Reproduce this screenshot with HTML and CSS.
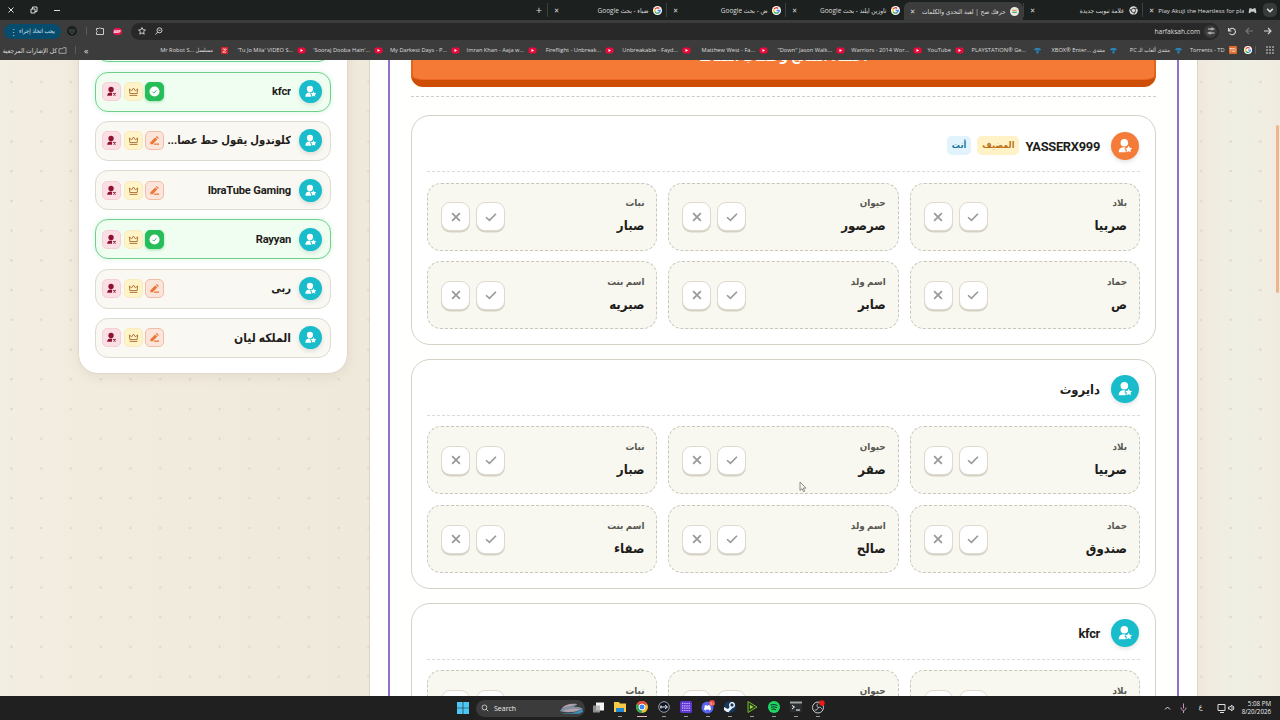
FILE: index.html
```html
<!DOCTYPE html>
<html lang="ar" dir="rtl">
<head>
    <meta charset="UTF-8">
    <meta name="viewport" content="width=device-width, initial-scale=1.0">
    <title>حرفك صح | لعبة التحدي والكلمات</title>
    <link rel="stylesheet" href="styles.css">
</head>
<body>
    <svg class="sprite" width="0" height="0">
        <symbol id="i-user" viewBox="0 0 24 24"><circle cx="11" cy="7.200" r="5.700"/><path d="M2.500 21.500c0-5 3-7.500 7.500-7.500 1.500 0 2 .2 2.500.5L11 16.500l2 2v3z"/><path d="M17.500 11.500l1.700 3.300 3.600.5-2.600 2.500.6 3.700-3.300-1.800-3.300 1.800.6-3.700-2.600-2.500 3.600-.5z"/></symbol>
        <symbol id="i-kick" viewBox="0 0 24 24"><circle cx="11" cy="7.500" r="5.800"/><path d="M2.500 21.500c0-5 3-7.500 7.500-7.500 2 0 3 .3 3.500 1L13 21.500z"/><path d="M16 15.500l5 5m0-5l-5 5" stroke="currentColor" stroke-width="2.400"/></symbol>
        <symbol id="i-crown" viewBox="0 0 24 24"><path d="M3 6.500l5 4 4-6 4 6 5-4-1 10H4zM3.500 20.500h17" fill="none" stroke="currentColor" stroke-width="2"/></symbol>
        <symbol id="i-pen" viewBox="0 0 24 24"><path d="M3 16L13.500 5.500l4.500 4.500L8 20H3zM15 4l2-2 4.500 4.500-2 2zM12 18.500h10V21.500h-12z"/></symbol>
        <symbol id="i-done" viewBox="0 0 24 24"><circle cx="12" cy="12" r="11"/><path d="M7.500 12.500l3 3 6-6.500" fill="none" stroke="#22b455" stroke-width="2"/></symbol>
        <symbol id="i-check" viewBox="0 0 14 14"><path d="M1.200 7.300l4 3.700 7.600-7.800" fill="none" stroke="currentColor" stroke-width="1.900"/></symbol>
        <symbol id="i-x" viewBox="0 0 14 14"><path d="M2.500 2.500l9 9m0-9l-9 9" fill="none" stroke="currentColor" stroke-width="2.100"/></symbol>
        <symbol id="i-google" viewBox="0 0 20 20"><circle cx="10" cy="10" r="10" fill="#fff"/><g fill="none" stroke-width="3"><path d="M14 5.500A6 6 0 0 0 4.700 7.200" stroke="#ea4335"/><path d="M4.700 7.200a6 6 0 0 0 0 5.600" stroke="#fbbc05"/><path d="M4.700 12.800a6 6 0 0 0 9 1.900" stroke="#34a853"/><path d="M13.700 14.700A6 6 0 0 0 16 10h-6" stroke="#4285f4"/></g></symbol>
        <symbol id="i-yt" viewBox="0 0 18 14"><rect x="1" y="1" width="16" height="12" rx="4" fill="#e90a3b"/><path d="M7 4l5 3-5 3z" fill="#fff"/></symbol>
        <symbol id="i-forum" viewBox="0 0 16 16"><path d="M0 7c2-7 14-7 16 0l-5 1-1 7H6L5 8z" fill="#2c86b8"/><path d="M5 7l3 2 3-2" stroke="#173a52" stroke-width="1.500" fill="none"/></symbol>
    </svg>

    <!-- browser -->
    <header class="browser">
        <div class="tabs">
            <span class="tab-list"><svg viewBox="0 0 10 10"><path d="M3 4.200L5 6.200 7 4.200"/></svg></span>
            <div class="tab"><svg class="fav" viewBox="0 0 16 16"><path d="M1 12l1.500-8H6l1 1.500h2L10 4h3.500L15 12l-2.500 1-2-3h-5l-2 3z" fill="#c8c8c8"/></svg><span class="tab-title" dir="ltr">Play Akuji the Heartless for pla</span><b>✕</b></div>
            <div class="tab"><svg class="fav" viewBox="0 0 16 16"><circle cx="8" cy="8" r="7.500" fill="#ddd"/><circle cx="8" cy="8" r="3.800" fill="#ddd" stroke="#222" stroke-width="1.400"/><path d="M8 4.200h7M4.700 10L1.500 5M11.300 10L8 15.500" stroke="#222" stroke-width="1.300"/></svg><span class="tab-title">علامة تبويب جديدة</span><b>✕</b></div>
            <div class="tab active"><svg class="fav" viewBox="0 0 16 16"><circle cx="8" cy="8" r="8" fill="#e9e9e4"/><path d="M4 6h8" stroke="#e78a35" stroke-width="2"/><path d="M4 9.500h8" stroke="#3aa76a" stroke-width="2"/></svg><span class="tab-title">حرفك صح | لعبة التحدي والكلمات</span><b>✕</b></div>
            <div class="tab"><svg class="fav"><use href="#i-google"/></svg><span class="tab-title">تاوزين ايلند - بحث Google</span><b>✕</b></div>
            <div class="tab"><svg class="fav"><use href="#i-google"/></svg><span class="tab-title">ض - بحث Google</span><b>✕</b></div>
            <div class="tab"><svg class="fav"><use href="#i-google"/></svg><span class="tab-title">ضباء - بحث Google</span><b>✕</b></div>
            <span class="new-tab">+</span>
            <svg class="window-controls" viewBox="0 0 60 10"><path d="M2.500 2.500l5 5m0-5l-5 5M48 5.500h6M25 4h4v4h-4zM26.500 4V2H31v4.500h-2"/></svg>
        </div>
        <div class="toolbar">
            <svg class="nav" viewBox="0 0 50 12"><path d="M40 6h7M44 3l3 3-3 3"/><path class="dim" d="M22 6h7M25 3l-3 3 3 3"/><path d="M4.500 3v3h3M5 5.500a3.300 3.300 0 1 1 .5 3"/></svg>
            <div class="omnibox">
                <span class="site-chip"><svg viewBox="0 0 10 10"><path d="M2 3h3M7 3h1.500M1.500 7H3M5 7h3.500"/><circle cx="6" cy="3" r="1"/><circle cx="4" cy="7" r="1"/></svg></span>
                <span class="url">harfaksah.com</span>
                <svg class="omni-icons" viewBox="0 0 26 10"><path d="M5 1.500l1 2.300 2.500.2-1.900 1.700.6 2.500L5 6.900 2.800 8.200l.6-2.500L1.500 4l2.500-.2z"/><circle cx="22.500" cy="4.300" r="2.500"/><path d="M20.800 6L18.500 8.500M21.500 4.300h2"/></svg>
            </div>
            <span class="abp">ABP</span>
            <svg class="ext" viewBox="0 0 10 10"><path d="M1.500 2.500h2.200a1.200 1.200 0 0 1 2.200 0h2.600v6h-7V6.500a1.200 1.200 0 0 0 0-2z"/></svg>
            <i class="sep"></i>
            <span class="profile"><svg viewBox="0 0 10 10"><path d="M3 3v3l2 2M7 3v3L5 8M5 3v3" fill="none" stroke="#4d564f"/></svg></span>
            <span class="action">يجب اتخاذ إجراء <em>⋮</em></span>
        </div>
        <nav class="bookmarks">
            <svg class="apps" viewBox="0 0 8 8"><path d="M0 0h2v2H0zM3 0h2v2H3zM6 0h2v2H6zM0 3h2v2H0zM3 3h2v2H3zM6 3h2v2H6zM0 6h2v2H0zM3 6h2v2H3zM6 6h2v2H6z"/></svg>
            <i class="sep"></i>
            <svg class="bm-google"><use href="#i-google"/></svg>
            <a class="bm bm-td"><span class="td">TD</span><span dir="ltr">Torrents - TD</span></a>
            <a class="bm bm-pc"><svg><use href="#i-forum"/></svg><span>منتدى ألعاب الـ PC</span></a>
            <a class="bm bm-xbox"><svg><use href="#i-forum"/></svg><span dir="ltr">XBOX® Enter... منتدى</span></a>
            <a class="bm bm-ps"><svg><use href="#i-forum"/></svg><span dir="ltr">PLAYSTATION® Ge...</span></a>
            <a class="bm bm-short"><svg><use href="#i-yt"/></svg><span dir="ltr">YouTube</span></a>
            <a class="bm"><svg><use href="#i-yt"/></svg><span dir="ltr">Warriors - 2014 Wor...</span></a>
            <a class="bm"><svg><use href="#i-yt"/></svg><span dir="ltr">"Down" Jason Walk...</span></a>
            <a class="bm"><svg><use href="#i-yt"/></svg><span dir="ltr">Matthew West - Fa...</span></a>
            <a class="bm"><svg><use href="#i-yt"/></svg><span dir="ltr">Unbreakable - Fayd...</span></a>
            <a class="bm"><svg><use href="#i-yt"/></svg><span dir="ltr">Fireflight - Unbreak...</span></a>
            <a class="bm"><svg><use href="#i-yt"/></svg><span dir="ltr">Imran Khan - Aaja w...</span></a>
            <a class="bm"><svg><use href="#i-yt"/></svg><span dir="ltr">My Darkest Days - P...</span></a>
            <a class="bm"><svg><use href="#i-yt"/></svg><span dir="ltr">'Sooraj Dooba Hain'...</span></a>
            <a class="bm"><svg><use href="#i-yt"/></svg><span dir="ltr">'Tu Jo Mila' VIDEO S...</span></a>
            <a class="bm bm-robot"><svg viewBox="0 0 16 16"><rect width="16" height="16" rx="2" fill="#d8232f"/><path d="M4 6a2 2 0 0 1 4 0 2 2 0 0 1 4 0c0 3-8 3-8 6h8" fill="none" stroke="#fff" stroke-width="1.500"/></svg><span dir="ltr">Mr Robot S... مسلسل</span></a>
            <span class="more" dir="ltr">«</span>
            <i class="sep"></i>
            <a class="bm bm-all"><svg viewBox="0 0 12 10"><path d="M1 2.500h5l1-1.500h4v8H1z" fill="none" stroke="#ccc"/></svg><span>كل الإشارات المرجعية</span></a>
        </nav>
    </header>

    <!-- page -->
    <main class="page">
        <i class="scrollbar"></i>
        <section class="panel">
            <div class="board">
                <button class="submit">اعتماد النتائج وحساب النقاط</button>
                <hr>

                <article class="card">
                    <div class="card-head"><span class="avatar host"><svg><use href="#i-user"/></svg></span><h3 dir="ltr">YASSERX999</h3><span class="tag tag-host">المضيف</span><span class="tag tag-you">أنت</span></div>
                    <div class="answers">
                        <div class="cell"><div><small>بلاد</small><p>صربيا</p></div><button><svg><use href="#i-check"/></svg></button><button><svg><use href="#i-x"/></svg></button></div>
                        <div class="cell"><div><small>حيوان</small><p>صرصور</p></div><button><svg><use href="#i-check"/></svg></button><button><svg><use href="#i-x"/></svg></button></div>
                        <div class="cell"><div><small>نبات</small><p>صبار</p></div><button><svg><use href="#i-check"/></svg></button><button><svg><use href="#i-x"/></svg></button></div>
                        <div class="cell"><div><small>جماد</small><p>ص</p></div><button><svg><use href="#i-check"/></svg></button><button><svg><use href="#i-x"/></svg></button></div>
                        <div class="cell"><div><small>اسم ولد</small><p>صابر</p></div><button><svg><use href="#i-check"/></svg></button><button><svg><use href="#i-x"/></svg></button></div>
                        <div class="cell"><div><small>اسم بنت</small><p>صبريه</p></div><button><svg><use href="#i-check"/></svg></button><button><svg><use href="#i-x"/></svg></button></div>
                    </div>
                </article>

                <article class="card">
                    <div class="card-head"><span class="avatar"><svg><use href="#i-user"/></svg></span><h3>دايروث</h3></div>
                    <div class="answers">
                        <div class="cell"><div><small>بلاد</small><p>صربيا</p></div><button><svg><use href="#i-check"/></svg></button><button><svg><use href="#i-x"/></svg></button></div>
                        <div class="cell"><div><small>حيوان</small><p>صقر</p></div><button><svg><use href="#i-check"/></svg></button><button><svg><use href="#i-x"/></svg></button></div>
                        <div class="cell"><div><small>نبات</small><p>صبار</p></div><button><svg><use href="#i-check"/></svg></button><button><svg><use href="#i-x"/></svg></button></div>
                        <div class="cell"><div><small>جماد</small><p>صندوق</p></div><button><svg><use href="#i-check"/></svg></button><button><svg><use href="#i-x"/></svg></button></div>
                        <div class="cell"><div><small>اسم ولد</small><p>صالح</p></div><button><svg><use href="#i-check"/></svg></button><button><svg><use href="#i-x"/></svg></button></div>
                        <div class="cell"><div><small>اسم بنت</small><p>صفاء</p></div><button><svg><use href="#i-check"/></svg></button><button><svg><use href="#i-x"/></svg></button></div>
                    </div>
                </article>

                <article class="card">
                    <div class="card-head"><span class="avatar"><svg><use href="#i-user"/></svg></span><h3 dir="ltr">kfcr</h3></div>
                    <div class="answers">
                        <div class="cell"><div><small>بلاد</small><p></p></div><button><svg><use href="#i-check"/></svg></button><button><svg><use href="#i-x"/></svg></button></div>
                        <div class="cell"><div><small>حيوان</small><p></p></div><button><svg><use href="#i-check"/></svg></button><button><svg><use href="#i-x"/></svg></button></div>
                        <div class="cell"><div><small>نبات</small><p></p></div><button><svg><use href="#i-check"/></svg></button><button><svg><use href="#i-x"/></svg></button></div>
                    </div>
                </article>
            </div>
        </section>

        <aside class="players">
            <div class="player ready"></div>
            <div class="player ready"><span class="avatar"><svg><use href="#i-user"/></svg></span><b dir="ltr">kfcr</b><i class="done"><svg><use href="#i-done"/></svg></i><i class="crown"><svg><use href="#i-crown"/></svg></i><i class="kick"><svg><use href="#i-kick"/></svg></i></div>
            <div class="player"><span class="avatar"><svg><use href="#i-user"/></svg></span><b>كلوندول يقول حط عصا...</b><i class="pen"><svg><use href="#i-pen"/></svg></i><i class="crown"><svg><use href="#i-crown"/></svg></i><i class="kick"><svg><use href="#i-kick"/></svg></i></div>
            <div class="player"><span class="avatar"><svg><use href="#i-user"/></svg></span><b dir="ltr">IbraTube Gaming</b><i class="pen"><svg><use href="#i-pen"/></svg></i><i class="crown"><svg><use href="#i-crown"/></svg></i><i class="kick"><svg><use href="#i-kick"/></svg></i></div>
            <div class="player ready"><span class="avatar"><svg><use href="#i-user"/></svg></span><b dir="ltr">Rayyan</b><i class="done"><svg><use href="#i-done"/></svg></i><i class="crown"><svg><use href="#i-crown"/></svg></i><i class="kick"><svg><use href="#i-kick"/></svg></i></div>
            <div class="player"><span class="avatar"><svg><use href="#i-user"/></svg></span><b>ربى</b><i class="pen"><svg><use href="#i-pen"/></svg></i><i class="crown"><svg><use href="#i-crown"/></svg></i><i class="kick"><svg><use href="#i-kick"/></svg></i></div>
            <div class="player"><span class="avatar"><svg><use href="#i-user"/></svg></span><b class="wide">الملكه ليان</b><i class="pen"><svg><use href="#i-pen"/></svg></i><i class="crown"><svg><use href="#i-crown"/></svg></i><i class="kick"><svg><use href="#i-kick"/></svg></i></div>
        </aside>
    </main>

    <!-- taskbar -->
    <footer class="taskbar" dir="ltr">
        <div class="dock">
            <svg class="start" viewBox="0 0 12 12"><path d="M0 0h5.700v5.700H0zM6.300 0H12v5.700H6.300zM0 6.300h5.700V12H0zM6.300 6.300H12V12H6.300z" fill="#4cc6f2"/></svg>
            <div class="search"><svg viewBox="0 0 10 10"><circle cx="4.300" cy="4.300" r="3"/><path d="M6.500 6.500L9 9"/></svg><span>Search</span><svg class="art" viewBox="0 0 26 12"><path d="M1 9c4-6 10-8 18-7l-4 3c4-1 7 0 10 2-7 3-15 5-24 2z" fill="#7d8ea0"/><path d="M3 6c4-4 10-5 16-4l-7 2zM4 9c6-3 12-3 19-2-6 3-13 4-19 2z" fill="#b49fa6"/><path d="M2 11c6 1 17 0 22-4l1 3-4 2H6z" fill="#3b8fb9"/></svg></div>
            <svg class="app" viewBox="0 0 14 14"><path d="M5 2h8v8H5z" fill="#f5f5f5"/><path d="M2 5h7v7H2z" fill="#aaa" opacity=".8"/></svg>
            <svg class="app run" viewBox="0 0 14 14"><path d="M1 2h5l1 1.500h6V12H1z" fill="#f7c948"/><path d="M3 8h8v4H3z" fill="#2387d6"/></svg>
            <svg class="app run on" viewBox="0 0 14 14"><circle cx="7" cy="7" r="6" fill="#eabf2b"/><path d="M7 7L1.800 4A6 6 0 0 1 12.200 4z" fill="#e5463a"/><path d="M7 7l0 6A6 6 0 0 1 1.800 4z" fill="#33a45a"/><circle cx="7" cy="7" r="3" fill="#4285f4" stroke="#fff"/></svg>
            <svg class="app run" viewBox="0 0 14 14"><circle cx="7" cy="7" r="5.300" fill="#111622" stroke="#9aa1b0"/><path d="M3 7h7M8 5l2.500 2L8 9M4 5.500v3" fill="none" stroke="#e9e9ee"/></svg>
            <svg class="app run" viewBox="0 0 14 14"><rect x="1" y="1" width="12" height="12" rx="2" fill="#6137d4"/><path d="M3 3.500h8M3 5.800h8M3 8.200h8M3 10.500h8" stroke="#d0bdff" stroke-width="1.200" stroke-dasharray="1.300 .9"/></svg>
            <svg class="app run" viewBox="0 0 14 14"><circle cx="6.500" cy="7.500" r="6" fill="#5865f2"/><path d="M3 9.500l.8-4 1.700-.5.5.7h1l.5-.7 1.700.5.800 4-1.800 1-.6-1H5.400l-.6 1z" fill="#fff"/><circle cx="11" cy="3" r="3" fill="#e84747"/><text x="9" y="4.500" font-size="4" fill="#fff">9+</text></svg>
            <svg class="app run" viewBox="0 0 14 14"><circle cx="7" cy="7" r="6" fill="#15365d"/><circle cx="9" cy="5" r="2.300" fill="#15365d" stroke="#fff" stroke-width="1.300"/><path d="M1 7l4 2 2.500-3 2 2-3 3-1 1.200-2-.4L1 10z" fill="#e8f2fa"/></svg>
            <svg class="app run" viewBox="0 0 14 14"><path d="M3 1.500l9 5.500-9 5.500z" fill="#263a1d" stroke="#76b82a"/><path d="M5 5v4l3.500-2z" fill="#9be14a"/></svg>
            <svg class="app run" viewBox="0 0 14 14"><circle cx="7" cy="7" r="6" fill="#1ed760"/><path d="M3.500 5c2.500-.7 5-.5 7 .6M4 7.200c2-.6 4-.4 6 .6M4.500 9.300c1.500-.4 3-.3 4.500.5" fill="none" stroke="#123" stroke-width="1"/></svg>
            <svg class="app run" viewBox="0 0 14 14"><path d="M1 2h12v10H1z" fill="#2b2f31"/><path d="M1 1.500h12v2H1z" fill="#9da2a5"/><path d="M3 5.500L5.500 7 3 9M7 10h4" fill="none" stroke="#fff"/></svg>
            <svg class="app run" viewBox="0 0 14 14"><circle cx="7" cy="7.500" r="5.500" fill="#202124" stroke="#ccc"/><path d="M7 3.500c-1.500 1.500-1 3 0 4 2-.7 3.500 0 4 2M7 7.500c0 2-1.500 3-3.500 2.500" fill="none" stroke="#bbb"/><circle cx="11" cy="3" r="2.700" fill="#f21818"/></svg>
        </div>
        <div class="tray">
            <svg viewBox="0 0 72 12"><path d="M2 7.500L4.500 5 7 7.500"/><path d="M20.500 1.500v5M18 5.500c0 4 5 4 5 0M20.500 9v2" stroke="#c994bd"/><path d="M55 2.500h7v6h-7zM57 10.500h4M65.500 5h1.500l2-2v6l-2-2h-1.500zM70 4c1 1 1 3 0 4"/></svg>
            <span class="lang">ع</span>
        </div>
        <div class="clock">5:08 PM<br>8/20/2026</div>
    </footer>

    <svg class="cursor" viewBox="0 0 8 12"><path d="M1 1v8.500l2-1.800 1.500 3 1.200-.6-1.400-3H7z" fill="#f4f4ee" stroke="#777" stroke-width=".8"/></svg>
</body>
</html>
```

FILE: styles.css
```css
* {
    box-sizing: border-box;
}
body {
    display: flex;
    flex-direction: column;
    width: 1280px;
    height: 720px;
    margin: 0;
    overflow: hidden;
    font-family: Roboto, "DejaVu Sans Condensed", "DejaVu Sans", sans-serif;
    color: #1e1d1b;
}
svg {
    display: block;
    flex: none;
    fill: currentColor;
}
.sprite {
    position: absolute;
}
button {
    font: inherit;
    padding: 0;
    border: 0;
}
.sep {
    width: 1px;
    height: 8px;
    background: #5b5b5b;
}

/* browser */
.browser {
    flex: none;
    height: 60px;
    background: #3c3c3c;
    color: #dedede;
    font-family: "Open Sans", "DejaVu Sans Condensed", "DejaVu Sans", sans-serif;
    font-size: 6.5px;
    white-space: nowrap;
}
.tabs {
    display: flex;
    align-items: center;
    height: 20px;
    padding: 0 3px 0 6px;
    background: #1c201f;
}
.tab-list {
    width: 14px;
    height: 14px;
    margin-left: 2px;
    border-radius: 5px;
    background: #373b3a;
}
.tab-list svg {
    width: 14px;
    height: 14px;
    fill: none;
    stroke: #ddd;
    stroke-width: 1.1;
}
.tab {
    display: flex;
    align-items: center;
    gap: 4px;
    width: 119px;
    height: 14px;
    padding: 0 4.5px 0 6px;
    border-left: 1px solid #3c403f;
}
.tab .fav {
    width: 9px;
    height: 9px;
}
.tab-title {
    flex: 1;
    overflow: hidden;
}
.tab:nth-child(2) .tab-title {
    font-size: 6.1px;
}
.tab b {
    font-size: 7px;
    font-weight: 400;
}
.tab.active {
    height: 18px;
    align-self: flex-end;
    border: 0;
    border-radius: 6px 6px 0 0;
    background: #3c3c3c;
}
.new-tab {
    margin-right: 5px;
    font-size: 11px;
    line-height: 14px;
}
.window-controls {
    width: 60px;
    height: 10px;
    margin-right: auto;
    fill: none;
    stroke: #ddd;
}
.toolbar {
    display: flex;
    align-items: center;
    height: 21px;
    padding: 1px 6px 0 4px;
}
.nav {
    width: 50px;
    height: 12px;
    fill: none;
    stroke: #d5d5d5;
    stroke-width: 1.1;
}
.nav .dim {
    stroke: #777;
}
.omnibox {
    display: flex;
    align-items: center;
    width: 1093px;
    height: 17px;
    margin-right: 5px;
    padding: 0 2px 0 6px;
    border-radius: 9px;
    background: #282828;
}
.site-chip {
    width: 13px;
    height: 13px;
    padding: 1.5px;
    border-radius: 50%;
    background: #3c3c3c;
}
.site-chip svg, .omni-icons, .ext {
    width: 10px;
    height: 10px;
    fill: none;
    stroke: #ccc;
    stroke-width: 1;
}
.url {
    margin-right: 4px;
    font-size: 6.6px;
}
.omni-icons {
    width: 26px;
    margin-right: auto;
}
.abp {
    margin-right: 9px;
    padding: 0 1px;
    border-radius: 4px;
    background: #e3184f;
    color: #fff;
    font-size: 3.5px;
    font-weight: 700;
    line-height: 7px;
}
.ext {
    margin: 0 8px;
}
.profile {
    width: 10px;
    height: 10px;
    margin: 0 9px 0 6px;
    border-radius: 50%;
    background: #1b1f1d;
}
.action {
    display: flex;
    align-items: center;
    justify-content: space-between;
    width: 57px;
    height: 15px;
    margin-right: auto;
    padding: 0 6px;
    border-radius: 8px;
    background: #074b6d;
    color: #d6ecf8;
    font-size: 6px;
}
.action em {
    font-style: normal;
    font-size: 8px;
}
.bookmarks {
    display: flex;
    align-items: center;
    height: 18px;
    padding: 0 6px;
    font-size: 5.7px;
}
.apps {
    width: 8px;
    height: 8px;
    margin-left: 10px;
    fill: #888;
}
.bm-google {
    width: 8px;
    height: 8px;
    margin: 0 3px 0 7px;
}
.bm {
    display: flex;
    align-items: center;
    gap: 4px;
    width: 77px;
    flex: none;
}
.bm svg {
    width: 9px;
    height: 7px;
}
.bm-td {
    width: 54px;
}
.td {
    padding: 0 1px;
    border-radius: 1px;
    background: #df6b2c;
    color: #fff;
    font-size: 5px;
    line-height: 8px;
}
.bm-pc {
    width: 65px;
}
.bm-xbox {
    width: 76px;
}
.bm-ps {
    width: 78px;
}
.bm-ps, .bm-robot {
    gap: 7px;
}
.bm-short {
    width: 42px;
}
.more {
    margin: 0 auto 0 8px;
    font-size: 9px;
}
.bm-all {
    width: 61px;
    gap: 1px;
    margin-right: 8px;
    font-size: 6.6px;
}

/* page */
.page {
    position: relative;
    display: flex;
    flex: 1;
    align-items: flex-start;
    gap: 21px;
    min-height: 0;
    padding-right: 82px;
    overflow: hidden;
    background:
        radial-gradient(circle at 11.5px 22px, #e0d9cc 1px, transparent 1.5px) 0 0 / 29.74px 29.74px,
        linear-gradient(90deg, #f3eee2 0, #f2ecdf 78px, #efe9dc 370px, #f1e8dd 1198px, #eff0e5 1240px, #f1ebdf 1280px);
}
.scrollbar {
    position: absolute;
    top: 65px;
    right: 1px;
    width: 3px;
    height: 168px;
    border-radius: 2px;
    background: #f0b48d;
}
.panel {
    width: 829px;
    height: 700px;
    padding: 0 18px;
    border: 1px solid #ddd5c5;
    border-top: 0;
    background: #fffffe;
}
.board {
    height: 100%;
    padding: 0 21px;
    border: solid #9270cc;
    border-width: 0 2px;
}
.submit {
    display: block;
    width: 100%;
    height: 49px;
    margin-top: -22px;
    border-radius: 0 0 12px 12px;
    background: #f47a35;
    box-shadow: inset 0 -1px 0 #ee6a24, inset 2px 0 0 #df661f, inset -2px 0 0 #df661f;
    border-bottom: 7px solid #ce4e05;
    color: #fff;
    font-size: 13.5px;
    font-weight: 700;
    line-height: 26px;
    padding-bottom: 6px;
}
hr {
    margin: 9px 0 18px;
    border: 0;
    border-top: 1px dashed #cfccc3;
}
.card {
    height: 229.8px;
    margin-bottom: 14px;
    padding: 15px;
    border: 1.5px solid #d5d2c5;
    border-radius: 19px;
    background: #fff;
}
.card-head {
    display: flex;
    align-items: center;
    height: 41px;
    padding: 0 1px 11px;
    border-bottom: 1px dashed #dcdad2;
}
.avatar {
    display: grid;
    place-items: center;
    flex: none;
    width: 28px;
    height: 28px;
    border-radius: 50%;
    background: #18bccb;
    box-shadow: 0 2px 4px rgba(60, 80, 70, .16);
    color: #fff;
}
.avatar svg {
    width: 16px;
    height: 16px;
}
.avatar.host {
    background: #f47b38;
}
h3 {
    margin: 1px 11px 0 0;
    font-size: 12.9px;
    letter-spacing: -.3px;
}
.tag {
    height: 19px;
    margin-right: 6px;
    padding: 0 5px;
    border-radius: 5px;
    font-size: 9px;
    font-weight: 700;
    line-height: 18px;
}
.tag-host {
    background: #fff2c7;
    color: #bd7116;
}
.tag-you {
    background: #e1f4fd;
    color: #19759c;
}
.answers {
    display: grid;
    grid-template-columns: repeat(3, 1fr);
    grid-auto-rows: 68px;
    gap: 10.8px;
    margin-top: 10.5px;
}
.cell {
    display: flex;
    align-items: center;
    gap: 6px;
    padding: 0 12px 0 13px;
    border: 1px dashed #c9c6b9;
    border-radius: 14px;
    background: #f8f8f1;
}
.cell div {
    flex: 1;
    height: 45px;
}
.cell small {
    display: block;
    height: 21px;
    color: #595852;
    font-size: 9.8px;
    font-weight: 700;
    line-height: 18px;
}
.cell p {
    margin: 0;
    font-size: 13.2px;
    font-weight: 700;
    line-height: 22px;
}
.cell button {
    width: 29px;
    height: 29px;
    padding: 0 7.5px;
    border: 1px solid #dedacf;
    border-radius: 9px;
    background: #fff;
    box-shadow: 0 1.5px 0 #d5d1c4;
    color: #98999b;
}
.cell button svg {
    width: 12px;
    height: 12px;
}

/* players */
.players {
    display: flex;
    flex-direction: column;
    gap: 9.3px;
    width: 270px;
    height: 353px;
    margin-top: -38.8px;
    padding: 0 16px;
    border: 1.5px solid #e2d9ca;
    border-radius: 20px;
    background: #fff;
    box-shadow: 0 3px 12px rgba(120, 100, 60, .1);
}
.player {
    display: flex;
    align-items: center;
    flex: none;
    gap: 2.5px;
    height: 40px;
    padding: 0 8px 0 6px;
    border: 1px solid #dddacf;
    border-radius: 13px;
    background: #f9f8f2;
}
.player.ready {
    border: 1.5px solid #6fd08b;
    background: #f0fef1;
    box-shadow: 0 0 5px rgba(80, 210, 120, .22);
}
.player .avatar {
    width: 23px;
    height: 23px;
}
.player .avatar svg {
    width: 13px;
    height: 13px;
}
.player b {
    flex: 1;
    margin-right: 5.5px;
    overflow: hidden;
    font-size: 11.2px;
    letter-spacing: -.2px;
    text-align: right;
    white-space: nowrap;
}
.player b.wide {
    font-size: 12px;
}
.player i {
    display: grid;
    place-items: center;
    flex: none;
    width: 19px;
    height: 19px;
    border: 1px solid;
    border-radius: 5px;
}
.player i svg {
    width: 11px;
    height: 11px;
}
.player .done {
    border-color: #27bf5b;
    background: #26bd59;
    box-shadow: 0 1px 3px rgba(34, 180, 85, .4);
}
.player .done svg {
    color: #fff;
}
.player .pen {
    border-color: #f2bda6;
    background: #fbe5da;
    color: #ed7435;
}
.player .crown {
    border-color: #faeabf;
    background: #fff3c8;
    color: #a96c2b;
}
.player .kick {
    border-color: #f5cfd6;
    background: #fbdfe4;
    color: #8d1230;
}

/* taskbar */
.taskbar {
    display: flex;
    align-items: center;
    flex: none;
    height: 24px;
    padding: 0 9px 0 457px;
    background: #202020;
    color: #eee;
    font-family: "Open Sans", "DejaVu Sans Condensed", sans-serif;
}
.dock {
    display: flex;
    align-items: center;
    gap: 8px;
}
.start {
    width: 12px;
    height: 12px;
}
.search {
    display: flex;
    align-items: center;
    gap: 5px;
    width: 109px;
    height: 17px;
    margin: 0 -2px 0 -1px;
    padding: 0 1px 0 5px;
    border-radius: 9px;
    background: #3b3b3b;
    font-size: 7px;
}
.search svg {
    width: 8px;
    height: 8px;
    fill: none;
    stroke: #ddd;
}
.search .art {
    width: 25px;
    height: 12px;
    margin-left: auto;
    stroke: none;
}
.app {
    width: 14px;
    height: 17px;
    padding-bottom: 2px;
}
.run {
    border-bottom: 1px solid #888;
    border-image: linear-gradient(90deg, transparent 38%, #999 38% 62%, transparent 62%) 1;
}
.run.on {
    border-image: linear-gradient(90deg, transparent 20%, #f0b8c2 20% 80%, transparent 80%) 1;
}
.tray {
    display: flex;
    position: relative;
    margin-left: auto;
}
.tray svg {
    width: 72px;
    height: 12px;
    fill: none;
    stroke: #ddd;
}
.lang {
    position: absolute;
    left: 36px;
    top: 0;
    font-size: 7px;
}
.clock {
    margin-left: 7px;
    font-size: 6.2px;
    line-height: 8.5px;
    text-align: right;
}

.cursor {
    position: absolute;
    left: 799px;
    top: 481px;
    width: 8px;
    height: 12px;
}
```
